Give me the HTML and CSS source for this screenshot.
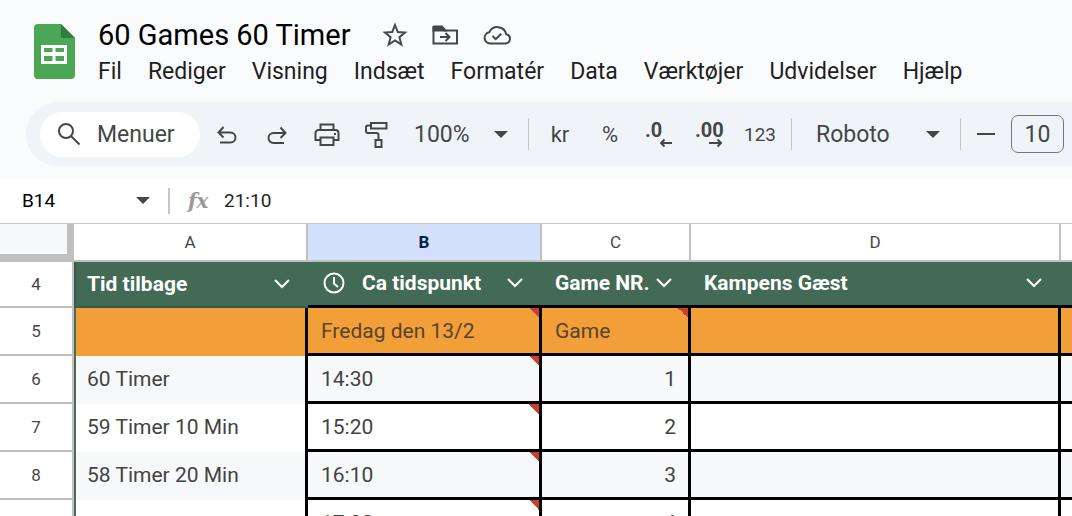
FILE: index.html
```html
<!DOCTYPE html>
<html lang="da">
  <head>
    <meta charset="UTF-8" />
    <meta name="viewport" content="width=device-width, initial-scale=1.0" />
    <title>60 Games 60 Timer</title>
    <link rel="stylesheet" href="styles.css">
  </head>
  <body>
    <header class="header">
      <svg class="logo" viewBox="0 0 41 55" aria-hidden="true">
        <path d="M4 0h23l14 14v37a4 4 0 0 1-4 4H4a4 4 0 0 1-4-4V4a4 4 0 0 1 4-4z" fill="#4ba754" />
        <path d="M27 0l14 14H27z" fill="#2f7d3a" />
        <path d="M7 21h26v19H7zM10 24v4h8.500v-4zM21.500 24v4H30v-4zM10 32v5h8.500v-5zM21.500 32v5H30v-5z" fill="#fff" fill-rule="evenodd" />
      </svg>
      <div class="heading">
        <div class="title-row">
          <h1>60 Games 60 Timer</h1>
          <button class="title-btn" type="button" aria-label="Stjerne">
            <svg width="26" height="26" viewBox="0 0 26 26"><path d="M13 3l2.800 7 7.200.5-5.600 4.700 1.900 7.300-6.300-4.100-6.300 4.100 1.900-7.300L3 10.500l7.200-.5z" /></svg>
          </button>
          <button class="title-btn" type="button" aria-label="Flyt">
            <svg width="26" height="26" viewBox="0 0 26 26"><path d="M1.500 21.500V5.500h8.500l2.500 3H25v13z" /><path d="M2 4.500h8l3.500 4H1.500V5z" fill="#444746" /><path d="M8 15h9M13.500 11l4 4-4 4" /></svg>
          </button>
          <button class="title-btn" type="button" aria-label="Dokumentstatus">
            <svg width="30" height="26" viewBox="0 0 30 26"><path d="M8 21.500h15.500a4.700 4.700 0 0 0 .7-9.300A9 9 0 0 0 7.300 10.200 5.700 5.700 0 0 0 8 21.500z" /><path d="M10.500 14l3.200 3.200 5.500-5.500" /></svg>
          </button>
        </div>
        <nav class="menu">
          <button type="button">Fil</button>
          <button type="button">Rediger</button>
          <button type="button">Visning</button>
          <button type="button">Indsæt</button>
          <button type="button">Formatér</button>
          <button type="button">Data</button>
          <button type="button">Værktøjer</button>
          <button type="button">Udvidelser</button>
          <button type="button">Hjælp</button>
        </nav>
      </div>
    </header>

    <div class="toolbar">
      <button class="search" type="button">
        <svg width="24" height="24" viewBox="0 0 24 24"><circle cx="9" cy="9" r="7" /><path d="M14 14l8.500 8.500" /></svg>
        <span>Menuer</span>
      </button>
      <button class="tool" type="button" aria-label="Fortryd">
        <svg width="24" height="24" viewBox="0 0 24 24"><path d="M5 20.500h10.500a5 5 0 0 0 0-10H4M8.500 5l-5 5.500 5 5" /></svg>
      </button>
      <button class="tool" type="button" aria-label="Annuller fortryd">
        <svg width="24" height="24" viewBox="0 0 24 24"><path d="M19 21H8.500a5 5 0 0 1 0-10H20M15.500 5.500l5 5.500-5 5" /></svg>
      </button>
      <button class="tool" type="button" aria-label="Udskriv">
        <svg width="26" height="26" viewBox="0 0 26 26"><path d="M6.500 8V3.500h13V8M6.500 19H1.500v-7a3 3 0 0 1 3-3h17a3 3 0 0 1 3 3v7h-5M6.500 16.500h13V24h-13z" /><path d="M20 12h2v2h-2z" fill="#444746" stroke="none" /></svg>
      </button>
      <button class="tool" type="button" aria-label="Kopiér formatering">
        <svg width="26" height="28" viewBox="0 0 26 28"><path d="M7 3h15.500v5.500H7zM7 5.500H4a2 2 0 0 0-2 2V11a2 2 0 0 0 2 2h8.500a2 2 0 0 1 2 2v4.500M11.500 20h6v7h-6z" /></svg>
      </button>
      <label class="picker zoom">
        <select aria-label="Zoom"><option>100%</option></select>
        <svg class="caret" width="14" height="7" viewBox="0 0 14 7"><path d="M0 0h14L7 7z" /></svg>
      </label>
      <span class="sep"></span>
      <button class="tool" type="button">kr</button>
      <button class="tool" type="button">%</button>
      <button class="tool" type="button" aria-label="Færre decimaler">
        <svg class="decimals" width="30" height="36" viewBox="0 0 30 36"><text x="0" y="21">.0</text><path d="M27 27H16M19.500 23.500L16 27l3.500 3.500" /></svg>
      </button>
      <button class="tool" type="button" aria-label="Flere decimaler">
        <svg class="decimals" width="30" height="36" viewBox="0 0 30 36"><text x="0" y="21">.00</text><path d="M14 27h11.500M22.500 23.500L26 27l-3.500 3.500" /></svg>
      </button>
      <button class="tool small" type="button">123</button>
      <span class="sep"></span>
      <label class="picker font">
        <select aria-label="Skrifttype"><option>Roboto</option></select>
        <svg class="caret" width="14" height="7" viewBox="0 0 14 7"><path d="M0 0h14L7 7z" /></svg>
      </label>
      <span class="sep last"></span>
      <button class="tool" type="button" aria-label="Mindre skrift">
        <svg width="18" height="18" viewBox="0 0 18 18"><path d="M0 9h18" /></svg>
      </button>
      <input class="font-size" type="text" value="10" aria-label="Skriftstørrelse" />
    </div>

    <div class="formula-bar">
      <input class="name-box" type="text" value="B14" aria-label="Navnefelt" />
      <svg class="caret" width="14" height="7" viewBox="0 0 14 7"><path d="M0 0h14L7 7z" /></svg>
      <label class="fx" for="formula">fx</label>
      <input class="formula" id="formula" type="text" value="21:10" />
    </div>

    <main class="grid">
      <table>
        <colgroup>
          <col class="col-head" />
          <col class="col-a" />
          <col class="col-b" />
          <col class="col-c" />
          <col class="col-d" />
          <col />
        </colgroup>
        <thead>
          <tr>
            <th class="corner"></th>
            <th>A</th>
            <th class="selected">B</th>
            <th>C</th>
            <th>D</th>
            <th></th>
          </tr>
        </thead>
        <tbody>
          <tr class="titles">
            <th>4</th>
            <td><div><span>Tid tilbage</span><svg class="chevron" viewBox="0 0 16 10"><path d="M1 1l7 7 7-7" /></svg></div></td>
            <td><div><svg class="clock" viewBox="0 0 22 22"><circle cx="11" cy="11" r="9.500" /><path d="M11 5v6.500l4 3.500" /></svg><span>Ca tidspunkt</span><svg class="chevron" viewBox="0 0 16 10"><path d="M1 1l7 7 7-7" /></svg></div></td>
            <td><div><span>Game NR.</span><svg class="chevron" viewBox="0 0 16 10"><path d="M1 1l7 7 7-7" /></svg></div></td>
            <td><div><span>Kampens Gæst</span><svg class="chevron" viewBox="0 0 16 10"><path d="M1 1l7 7 7-7" /></svg></div></td>
            <td></td>
          </tr>
          <tr class="day">
            <th>5</th>
            <td></td>
            <td class="note">Fredag den 13/2</td>
            <td class="note">Game</td>
            <td></td>
            <td></td>
          </tr>
          <tr class="band">
            <th>6</th>
            <td>60 Timer</td>
            <td class="note">14:30</td>
            <td class="num">1</td>
            <td></td>
            <td></td>
          </tr>
          <tr>
            <th>7</th>
            <td>59 Timer 10 Min</td>
            <td class="note">15:20</td>
            <td class="num">2</td>
            <td></td>
            <td></td>
          </tr>
          <tr class="band">
            <th>8</th>
            <td>58 Timer 20 Min</td>
            <td class="note">16:10</td>
            <td class="num">3</td>
            <td></td>
            <td></td>
          </tr>
          <tr>
            <th></th>
            <td></td>
            <td class="note">17:00</td>
            <td class="num">4</td>
            <td></td>
            <td></td>
          </tr>
        </tbody>
      </table>
    </main>
  </body>
</html>
```

FILE: styles.css
```css
* {
  box-sizing: border-box;
}
body {
  margin: 0;
  height: 100vh;
  overflow: hidden;
  display: flex;
  flex-direction: column;
  font-family: Roboto, "Liberation Sans", sans-serif;
  color: #1f1f1f;
  background: #f9fbfd;
}
button,
input,
select {
  font: inherit;
  color: inherit;
  border: 0;
  padding: 0;
  margin: 0;
  background: none;
}
svg {
  display: block;
  flex: none;
  fill: none;
  stroke: #444746;
  stroke-width: 2;
}
.caret {
  fill: #444746;
  stroke: none;
}

/* Header */
.header {
  display: flex;
  flex: none;
  padding: 16px 0 12px 34px;
  gap: 23px;
}
.logo {
  width: 41px;
  height: 55px;
  margin-top: 8px;
  stroke: none;
}
.title-row {
  display: flex;
  align-items: center;
  height: 38px;
  gap: 24px;
}
h1 {
  margin: 0 7px 0 0;
  font-size: 29px;
  font-weight: 400;
  line-height: 38px;
  color: #000;
  white-space: nowrap;
}
.menu {
  display: flex;
  gap: 26px;
  font-size: 23px;
  line-height: 36px;
}

/* Toolbar */
.toolbar {
  display: flex;
  flex: none;
  align-items: center;
  height: 64px;
  margin: 0 0 13px 26px;
  padding-left: 14px;
  overflow: hidden;
  background: #f0f4f9;
  border-radius: 32px 0 0 32px;
  font-size: 23px;
  color: #444746;
}
.toolbar > * {
  flex: none;
}
.search {
  display: flex;
  align-items: center;
  gap: 16px;
  width: 160px;
  height: 45px;
  margin-right: 2px;
  padding-left: 17px;
  border-radius: 23px;
  background: #fff;
}
.tool {
  display: flex;
  align-items: center;
  justify-content: center;
  width: 50px;
  height: 44px;
  font-size: 22px;
}
.small {
  font-size: 19px;
}
.decimals text {
  font-size: 20px;
  font-weight: 700;
  fill: #444746;
  stroke: none;
}
.picker {
  display: grid;
  align-items: center;
}
.picker > * {
  grid-area: 1 / 1;
}
.picker select {
  appearance: none;
  width: 100%;
  height: 44px;
}
.picker .caret {
  justify-self: end;
  margin-right: 14px;
  pointer-events: none;
}
.zoom {
  width: 120px;
}
.zoom select {
  padding-left: 12px;
}
.font {
  width: 156px;
}
.font select {
  padding-left: 18px;
}
.sep {
  width: 1px;
  height: 32px;
  margin: 0 6px;
  background: #c7c7c7;
}
.last {
  margin-right: 0;
}
.font-size {
  width: 53px;
  height: 38px;
  border: 1px solid #747775;
  border-radius: 7px;
  text-align: center;
}

/* Formula bar */
.formula-bar {
  display: flex;
  flex: none;
  align-items: center;
  height: 45px;
  padding: 0 0 1px 22px;
  border-bottom: 1px solid #c7c7c7;
  background: #fff;
  font-size: 19px;
}
.name-box {
  width: 114px;
  color: #000;
}
.fx {
  width: 56px;
  margin-left: 18px;
  padding-left: 18px;
  border-left: 2px solid #c7c7c7;
  font-family: "DejaVu Serif", serif;
  font-style: italic;
  font-weight: 700;
  font-size: 20px;
  line-height: 26px;
  color: #999;
}
.formula {
  flex: 1;
  min-width: 0;
}

/* Sheet */
.grid {
  flex: 1;
  min-height: 0;
  overflow: hidden;
  background: #fff;
}
table {
  width: 100%;
  table-layout: fixed;
  border-collapse: separate;
  border-spacing: 0;
}
.col-head {
  width: 74px;
}
.col-a,
.col-b {
  width: 234px;
}
.col-c {
  width: 149px;
}
.col-d {
  width: 370px;
}
th {
  padding: 0;
  border: solid #c0c0c0;
  border-width: 0 2px 2px 0;
  background: #fff;
  font-size: 17px;
  font-weight: 400;
  color: #444746;
}
thead th {
  height: 38px;
}
.corner {
  border-width: 0 7px 8px 0;
  background: #f8f9fa;
}
.selected {
  background: #d3e0fb;
  font-weight: 700;
  color: #041e49;
}
td {
  height: 48px;
  padding: 0 12px 0 13px;
  border: solid #000;
  border-width: 0 3px 3px 0;
  font-size: 21px;
  color: #434343;
  white-space: nowrap;
}
tbody th + td {
  padding: 0 11px 3px;
  border-left: 2px solid #4d6b5c;
  border-bottom: 0;
}
.band td {
  background-color: #f6f8f9;
}
.day td {
  background-color: #f29f3a;
  color: #54452f;
}
.titles td {
  height: 46px;
  padding-bottom: 1px;
  border-right: 0;
  background: #426a55;
  font-weight: 700;
  color: #fff;
}
.titles th + td {
  border-color: #36594a;
  border-bottom: 2px solid #36594a;
}
thead th:last-child,
td:last-child {
  border-right: 0;
}
.titles div {
  display: flex;
  align-items: center;
}
.chevron {
  width: 16px;
  height: 10px;
  margin-left: auto;
  margin-right: 7px;
  stroke: #fff;
}
.clock {
  width: 22px;
  height: 22px;
  margin-left: 2px;
  margin-right: 17px;
  stroke: #fff;
}
.num {
  text-align: right;
}
/* red corner shows that the cell has a note */
.note {
  background-image: linear-gradient(to top right, transparent 50%, #c8402f 50%);
  background-repeat: no-repeat;
  background-position: right top;
  background-size: 10px 10px;
}
```
